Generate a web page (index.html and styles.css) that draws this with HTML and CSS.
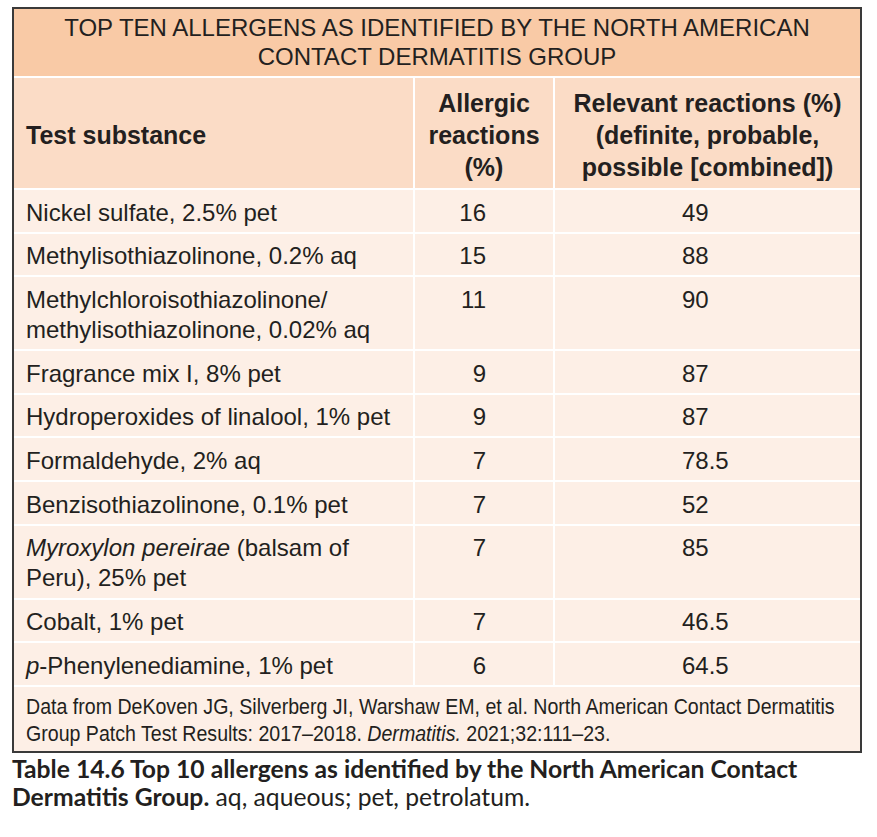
FILE: index.html
```html
<!DOCTYPE html>
<html lang="en">
<head>
<meta charset="utf-8">
<title>Top ten allergens</title>
<link rel="stylesheet" href="styles.css">
</head>
<body>
<div class="page">
  <div class="box">
    <table class="t">
      <colgroup><col class="c1"><col class="c2"><col class="c3"></colgroup>
      <thead>
        <tr><th colspan="3" class="title">TOP TEN ALLERGENS AS IDENTIFIED BY THE NORTH AMERICAN<br>CONTACT DERMATITIS GROUP</th></tr>
        <tr class="head">
          <th class="h1">Test substance</th>
          <th>Allergic<br>reactions<br>(%)</th>
          <th>Relevant reactions (%)<br>(definite, probable,<br>possible [combined])</th>
        </tr>
      </thead>
      <tbody>
        <tr><td class="s">Nickel sulfate, 2.5% pet</td><td class="n2">16</td><td class="n3">49</td></tr>
        <tr><td class="s">Methylisothiazolinone, 0.2% aq</td><td class="n2">15</td><td class="n3">88</td></tr>
        <tr><td class="s">Methylchloroisothiazolinone/<br>methylisothiazolinone, 0.02% aq</td><td class="n2">11</td><td class="n3">90</td></tr>
        <tr><td class="s">Fragrance mix I, 8% pet</td><td class="n2">9</td><td class="n3">87</td></tr>
        <tr><td class="s">Hydroperoxides of linalool, 1% pet</td><td class="n2">9</td><td class="n3">87</td></tr>
        <tr><td class="s">Formaldehyde, 2% aq</td><td class="n2">7</td><td class="n3">78.5</td></tr>
        <tr><td class="s">Benzisothiazolinone, 0.1% pet</td><td class="n2">7</td><td class="n3">52</td></tr>
        <tr><td class="s"><i>Myroxylon pereirae</i> (balsam of<br>Peru), 25% pet</td><td class="n2">7</td><td class="n3">85</td></tr>
        <tr><td class="s">Cobalt, 1% pet</td><td class="n2">7</td><td class="n3">46.5</td></tr>
        <tr><td class="s"><i>p</i>-Phenylenediamine, 1% pet</td><td class="n2">6</td><td class="n3">64.5</td></tr>
      </tbody>
      <tfoot>
        <tr><td colspan="3" class="note"><span class="narrow">Data from DeKoven JG, Silverberg JI, Warshaw EM, et al. North American Contact Dermatitis<br>Group Patch Test Results: 2017–2018. <i>Dermatitis.</i> 2021;32:111–23.</span></td></tr>
      </tfoot>
    </table>
  </div>
  <p class="caption"><b>Table 14.6 Top 10 allergens as identified by the North American Contact<br>Dermatitis Group.</b> aq, aqueous; pet, petrolatum.</p>
</div>
</body>
</html>
```

FILE: styles.css
```css
body {
  margin: 0;
  background: #ffffff;
  font-family: "Liberation Sans", Arial, sans-serif;
  color: #231f20;
}

.page {
  padding: 7px 0 0 12px;
}

.box {
  width: 850px;
  box-sizing: border-box;
  border: 2px solid #3a3a3a;
  background: #fdefe6;
}

.t {
  width: 100%;
  border-spacing: 0;
  table-layout: fixed;
  font-size: 24px;
}

.c1 { width: 399px; }
.c2 { width: 140px; }
.c3 { width: 307px; }

.t th,
.t td {
  padding: 0;
}

.t th + th,
.t td + td {
  border-left: 2px solid #ffffff;
}

.title {
  background: #f9caa6;
  font-weight: normal;
  font-size: 24px;
  line-height: 29px;
  padding: 4px 0 5px !important;
  text-align: center;
}

.head th {
  background: #fbdcc6;
  font-size: 25px;
  line-height: 32px;
  font-weight: bold;
  border-top: 2px solid #ffffff;
  vertical-align: top;
  text-align: center;
  padding: 9px 0 5px;
}

.head .h1 {
  text-align: left;
  vertical-align: middle;
  padding-left: 12px;
}

.t td {
  background: #fdefe6;
  line-height: 30px;
  padding: 7.5px 0 4.2px;
  vertical-align: top;
  border-top: 2px solid #ffffff;
}

.t td.s {
  padding-left: 12px;
}

.t td.n2 {
  text-align: right;
  padding-right: 67px;
}

.t td.n3 {
  text-align: left;
  padding-left: 127px;
}

.t td.note {
  font-size: 22.5px;
  line-height: 27px;
  padding: 6px 0 4px 12px;
  white-space: nowrap;
  overflow: hidden;
}

.narrow {
  display: inline-block;
  width: 800px;
  transform: scaleX(0.87);
  transform-origin: left top;
}

.caption {
  margin: 2px 0 0 0;
  font-family: Lato, "Open Sans", sans-serif;
  font-size: 24.7px;
  line-height: 28px;
  color: #231f20;
}

.caption b {
  font-weight: bold;
}
```
